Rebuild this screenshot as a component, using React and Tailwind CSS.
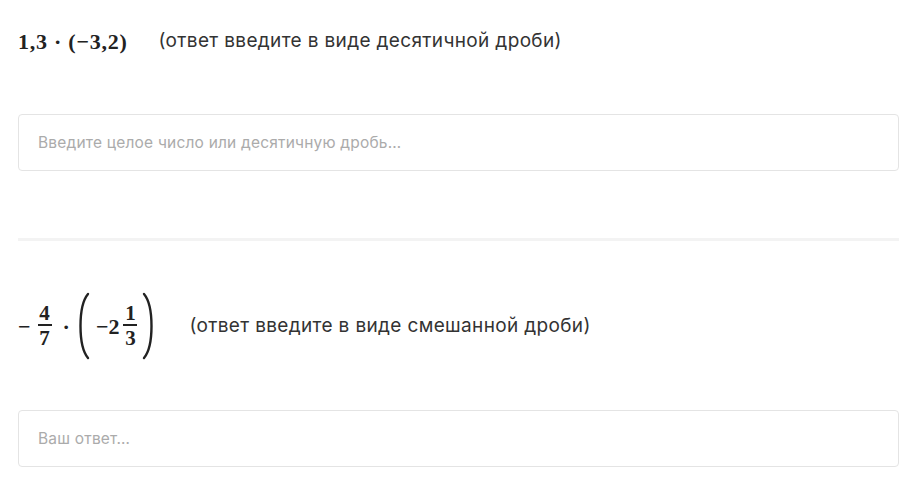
import React from 'react'

const MATH = "font-['Liberation_Serif','DejaVu_Serif',serif] font-bold text-[#222]"
const BODY = "font-['Inter','Noto_Sans',sans-serif]"

function Frac({ top, bottom }) {
  return (
    <span className="mx-[4px] inline-flex flex-col items-center leading-none">
      <span className="text-[21px] leading-[22px]">{top}</span>
      <span className="h-[1.5px] w-[14px] bg-[#222]" />
      <span className="text-[21px] leading-[24px]">{bottom}</span>
    </span>
  )
}

function Paren({ right }) {
  return (
    <svg width="14" height="68" viewBox="0 0 14 68" className="shrink-0">
      <path
        d={right ? 'M3 2 C13 14 13 54 3 66' : 'M11 2 C1 14 1 54 11 66'}
        fill="none"
        stroke="#222"
        strokeWidth="2.4"
        strokeLinecap="round"
      />
    </svg>
  )
}

function AnswerInput({ placeholder }) {
  return (
    <input
      type="text"
      placeholder={placeholder}
      className={`${BODY} h-[57px] w-full rounded-[4px] border border-[#e4e4e4] bg-white px-[19px] text-[15.5px] tracking-[0.2px] text-[#333] placeholder:text-[#ababab] outline-none`}
    />
  )
}

export default function App() {
  return (
    <div className="min-h-screen bg-white px-[18px] pr-[24px]">
      {/* task 1 */}
      <div className="flex h-[82px] items-center">
        <span className={`${MATH} text-[22px] tracking-[0.75px]`}>1,3 · (−3,2)</span>
        <span className={`${BODY} ml-[31px] text-[19px] tracking-[0.35px] text-[#333]`}>
          (ответ введите в виде десятичной дроби)
        </span>
      </div>
      <div className="mt-[32px]">
        <AnswerInput placeholder="Введите целое число или десятичную дробь…" />
      </div>

      <div className="mt-[67px] h-[3px] bg-[#f3f3f3]" />

      {/* task 2 */}
      <div className="mt-[51px] flex h-[68px] items-center">
        <span className={`${MATH} flex items-center text-[22px]`}>
          <span className="mr-[3px]">−</span>
          <Frac top="4" bottom="7" />
          <span className="mx-[7px]">·</span>
          <Paren />
          <span className="ml-[5px]">−2</span>
          <Frac top="1" bottom="3" />
          <Paren right />
        </span>
        <span className={`${BODY} ml-[34px] text-[19px] tracking-[0.35px] text-[#333]`}>
          (ответ введите в виде смешанной дроби)
        </span>
      </div>
      <div className="mt-[50px]">
        <AnswerInput placeholder="Ваш ответ…" />
      </div>
    </div>
  )
}
